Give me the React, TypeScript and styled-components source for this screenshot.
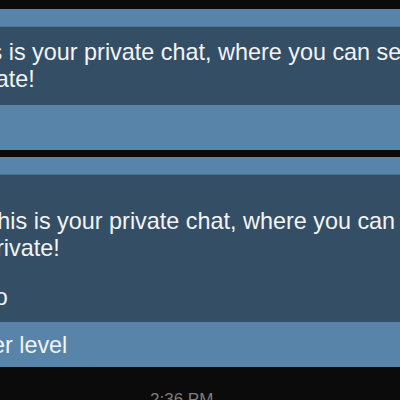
import styled, { createGlobalStyle } from 'styled-components';

const GlobalStyle = createGlobalStyle`
  html, body {
    margin: 0;
    padding: 0;
    background: #0b0b0b;
  }
  body {
    font-family: "Liberation Sans", Arial, sans-serif;
  }
`;

const App = () => {
  return (
    <Screen>
      <GlobalStyle />
      <ChatCard>
        <CardHeader />
        <CardBody $top={12} $bottom={12}>
          <TextBlock $shift={-42}>
            <Line>This is your private chat, where you can set reminders and keep notes. Everything here is</Line>
            <Line>private!</Line>
          </TextBlock>
        </CardBody>
        <CardFooter />
      </ChatCard>

      <ChatCard>
        <CardHeader />
        <CardBody $top={33} $bottom={11}>
          <TextBlock $shift={-17}>
            <Line>This is your private chat, where you can</Line>
            <Line>private!</Line>
            <Paragraph>To</Paragraph>
          </TextBlock>
        </CardBody>
        <CardFooter>
          <FooterLabel $shift={-51}>Upper level</FooterLabel>
        </CardFooter>
      </ChatCard>

      <Timestamp>2:36 PM</Timestamp>
    </Screen>
  );
};

export default App;

const Screen = styled.div`
  width: 400px;
  height: 400px;
  overflow: hidden;
  padding-top: 9px;
  box-sizing: border-box;
  display: flex;
  flex-direction: column;
  gap: 7px;
  background: #0b0b0b;
`;

const ChatCard = styled.section`
  display: flex;
  flex-direction: column;
  background: #5784a8;
`;

const CardHeader = styled.div`
  height: 17px;
  border-bottom: 1px solid #4a7394;
`;

const CardBody = styled.div<{ $top: number; $bottom: number }>`
  background: #344e65;
  padding: ${({ $top }) => $top}px 0 ${({ $bottom }) => $bottom}px;
  overflow: hidden;
  color: #f2f4f6;
  font-size: 23.4px;
  line-height: 27px;
`;

const TextBlock = styled.div<{ $shift: number }>`
  margin-left: ${({ $shift }) => $shift}px;
`;

const Line = styled.div`
  white-space: nowrap;
`;

const Paragraph = styled(Line)`
  margin-top: 22px;
`;

const CardFooter = styled.div`
  height: 45px;
  overflow: hidden;
  color: #f2f4f6;
  font-size: 23.4px;
  line-height: 46px;
`;

const FooterLabel = styled.div<{ $shift: number }>`
  margin-left: ${({ $shift }) => $shift}px;
  white-space: nowrap;
`;

const Timestamp = styled.div`
  padding-left: 150px;
  padding-top: 16px;
  color: #7d7d7d;
  font-size: 17px;
  white-space: nowrap;
`;
